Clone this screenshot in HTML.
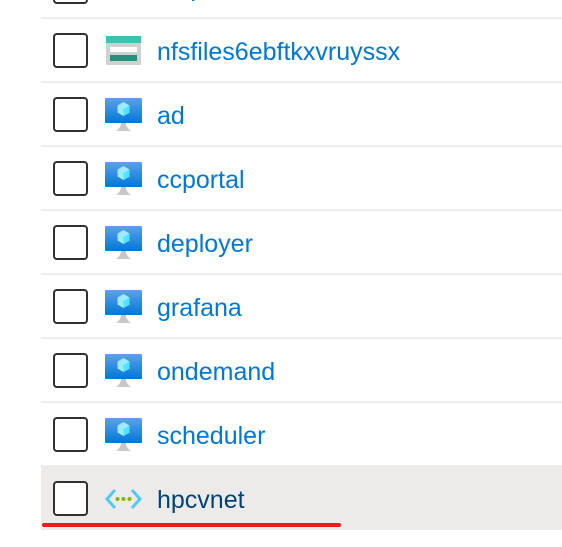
<!DOCTYPE html><html><head><style>
body{margin:0;width:562px;height:547px;background:#fff;position:relative;overflow:hidden;font-family:"Segoe UI","Liberation Sans",sans-serif}
.r{position:absolute;left:41px;right:0;height:63px;border-bottom:2px solid #ededed}
.cb{position:absolute;left:12px;top:15px;width:31px;height:31px;border:2px solid #323130;border-radius:4px;background:#fff}
.ic{position:absolute;left:64px;top:15px;width:37px;height:36px}
.t{position:absolute;left:116px;top:18px;font-size:25px;color:#0078d4;line-height:32px}
</style></head><body>
<div class="r" style="top:-46px"><div class="cb"></div><div class="ic" style="background:linear-gradient(#bbb,#ddd);top:40px;height:6px;left:65px"></div><div class="t">nfsprivatevault</div></div>
<div class="r" style="top:18px"><div class="cb"></div>
<svg class="ic" viewBox="0 0 37 36"><rect x="1" y="3" width="35" height="7" fill="#3fc1b0"/><rect x="1" y="10" width="35" height="22" rx="1" fill="#d0d0d0"/><rect x="5" y="14" width="27" height="5" fill="#fff"/><rect x="5" y="22" width="27" height="6" fill="#2f8a7e"/></svg>
<div class="t">nfsfiles6ebftkxvruyssx</div></div>
<script>
var names=["ad","ccportal","deployer","grafana","ondemand","scheduler"];
var s="";names.forEach(function(n,i){s+='<div class="r" style="top:'+(82+i*64)+'px"><div class="cb"></div><svg class="ic" viewBox="0 0 37 36"><defs><linearGradient id="g'+i+'" x1="0" y1="0" x2="0" y2="1"><stop offset="0" stop-color="#5ea0ef"/><stop offset="1" stop-color="#0078d4"/></linearGradient></defs><rect x="0" y="1" width="37" height="25" rx="1" fill="url(#g'+i+')"/><path d="M18.5 5l6 3.5v7l-6 3.5-6-3.5v-7z" fill="#9cebff"/><path d="M18.5 12l6-3.5v7l-6 3.5z" fill="#50e6ff"/><path d="M11 34c3-2 5-5 5-8h5c0 3 2 6 5 8z" fill="#c8c8c8"/></svg><div class="t">'+n+'</div></div>'});
document.write(s);
</script>
<div class="r" style="top:466px;background:#edebe9;height:64px;border:none"><div class="cb"></div>
<svg class="ic" viewBox="0 0 37 36"><path d="M10 9l-8 9 8 9M27 9l8 9-8 9" fill="none" stroke="#50c8f5" stroke-width="3"/><circle cx="12.5" cy="18" r="2" fill="#7fba00"/><circle cx="18.5" cy="18" r="2" fill="#7fba00"/><circle cx="24.5" cy="18" r="2" fill="#7fba00"/></svg>
<div class="t" style="color:#004578">hpcvnet</div></div>
<div style="position:absolute;left:42px;top:523px;width:299px;height:4px;background:#e81c1c;border-radius:2px"></div>
</body></html>
